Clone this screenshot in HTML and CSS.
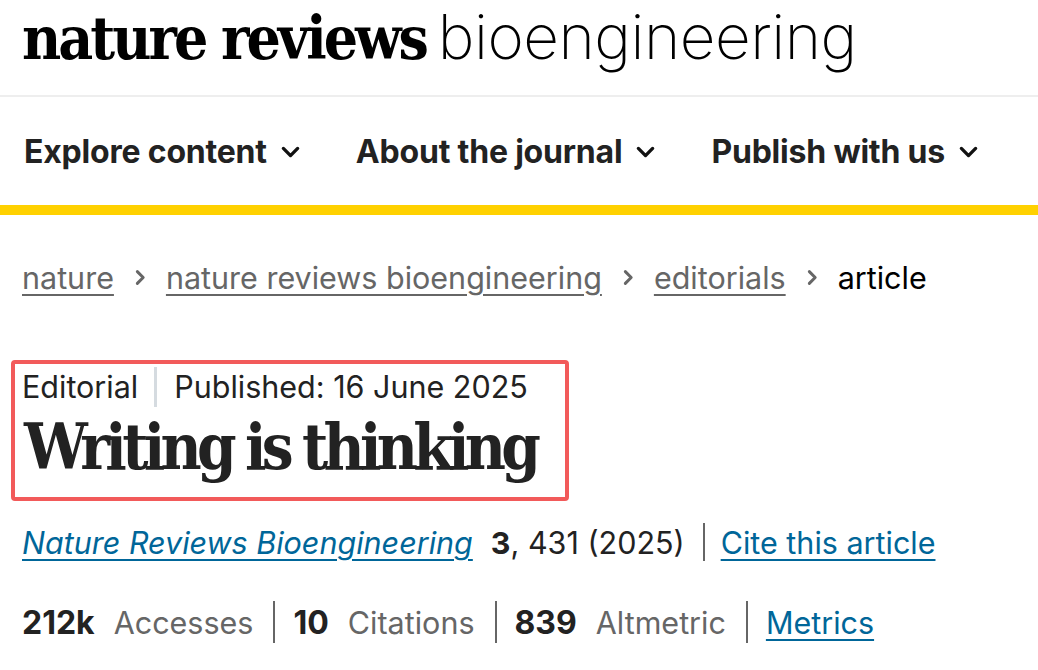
FILE: index.html
```html
<!DOCTYPE html>
<html lang="en">
<head>
<meta charset="utf-8">
<title>Writing is thinking | Nature Reviews Bioengineering</title>
<link rel="stylesheet" href="styles.css">
</head>
<body>
<header class="masthead">
  <div class="logo"><span class="logo-bold">nature reviews</span><span class="logo-light">bioengineering</span></div>
</header>
<nav class="mainnav">
  <ul class="navlist">
    <li class="navitem">Explore content<svg class="chev" viewBox="0 0 16 10" width="19" height="12"><path d="M2 2l6 6 6-6" fill="none" stroke="#111" stroke-width="2.8" stroke-linecap="round" stroke-linejoin="round"/></svg></li>
    <li class="navitem">About the journal<svg class="chev" viewBox="0 0 16 10" width="19" height="12"><path d="M2 2l6 6 6-6" fill="none" stroke="#111" stroke-width="2.8" stroke-linecap="round" stroke-linejoin="round"/></svg></li>
    <li class="navitem">Publish with us<svg class="chev" viewBox="0 0 16 10" width="19" height="12"><path d="M2 2l6 6 6-6" fill="none" stroke="#111" stroke-width="2.8" stroke-linecap="round" stroke-linejoin="round"/></svg></li>
  </ul>
</nav>
<div class="yellowbar"></div>
<main class="content">
  <ol class="crumbs">
    <li class="crumb"><a href="#">nature</a></li>
    <li class="sep"><svg viewBox="0 0 10 16" width="12" height="17"><path d="M2.5 2.5l5.5 5.5-5.5 5.5" fill="none" stroke="#666" stroke-width="2.8" stroke-linecap="round" stroke-linejoin="round"/></svg></li>
    <li class="crumb"><a href="#">nature reviews bioengineering</a></li>
    <li class="sep"><svg viewBox="0 0 10 16" width="12" height="17"><path d="M2.5 2.5l5.5 5.5-5.5 5.5" fill="none" stroke="#666" stroke-width="2.8" stroke-linecap="round" stroke-linejoin="round"/></svg></li>
    <li class="crumb"><a href="#">editorials</a></li>
    <li class="sep"><svg viewBox="0 0 10 16" width="12" height="17"><path d="M2.5 2.5l5.5 5.5-5.5 5.5" fill="none" stroke="#666" stroke-width="2.8" stroke-linecap="round" stroke-linejoin="round"/></svg></li>
    <li class="crumb current">article</li>
  </ol>
  <div class="highlight">
    <ul class="meta">
      <li class="meta-type">Editorial</li>
      <li class="meta-date">Published: 16 June 2025</li>
    </ul>
    <h1 class="title">Writing is thinking</h1>
  </div>
  <p class="citation"><a class="journal" href="#">Nature Reviews Bioengineering</a><b class="vol">3</b>, 431 (2025)<span class="vbar"></span><a class="cite" href="#">Cite this article</a></p>
  <ul class="stats">
    <li class="stat"><b>212k</b><span class="label">Accesses</span></li>
    <li class="stat"><b>10</b><span class="label">Citations</span></li>
    <li class="stat"><b>839</b><span class="label">Altmetric</span></li>
    <li class="stat"><a href="#">Metrics</a></li>
  </ul>
</main>
</body>
</html>
```

FILE: styles.css
```css
* { box-sizing: border-box; }
body {
  margin: 0;
  background: #fff;
  color: #222;
  font-family: Inter, "Liberation Sans", sans-serif;
}
.masthead {
  height: 97px;
  border-bottom: 2px solid #eeeeee;
  padding: 6px 0 0 22px;
}
.logo {
  display: flex;
  align-items: baseline;
  gap: 12px;
  line-height: 1;
  white-space: nowrap;
}
.logo-bold {
  font-family: "DejaVu Serif Condensed", "DejaVu Serif", serif;
  font-weight: bold;
  font-size: 60px;
  letter-spacing: -3px;
  color: #000;
}
.logo-light {
  font-family: Inter, "Liberation Sans", sans-serif;
  font-weight: 200;
  font-size: 62px;
  letter-spacing: -0.5px;
  color: #000;
}
.mainnav {
  height: 108px;
  display: flex;
  align-items: center;
  padding-left: 24px;
}
.navlist {
  list-style: none;
  margin: 0;
  padding: 0;
  display: flex;
  gap: 56px;
}
.navitem {
  font-size: 32px;
  font-weight: 700;
  color: #222;
  display: flex;
  align-items: center;
  gap: 14px;
  letter-spacing: -0.2px;
}
.chev { margin-top: 2px; }
.yellowbar {
  height: 10px;
  background: #ffd100;
}
.content {
  padding: 0 0 0 22px;
}
.crumbs {
  list-style: none;
  margin: 0;
  padding: 0;
  display: flex;
  align-items: center;
  gap: 20px;
  height: 124px;
  font-size: 30.5px;
}
.crumb a {
  color: #666;
  text-decoration: underline;
  text-underline-offset: 5px;
  text-decoration-thickness: 2px;
}
.crumb.current { color: #000; }
.sep { display: flex; align-items: center; }
.highlight {
  width: fit-content;
  margin-left: -11px;
  margin-top: 21px;
  border: 4px solid #f25a5a;
  border-radius: 4px;
  padding: 3px 29px 12px 7px;
}
.meta {
  list-style: none;
  margin: 0;
  padding: 0;
  display: flex;
  font-size: 30.5px;
  color: #222;
  line-height: 40px;
}
.meta-type {
  padding-right: 16px;
  border-right: 3px solid #d5dbe0;
  margin-right: 17px;
}
.title {
  margin: 2px 0 0 2px;
  font-family: "DejaVu Serif Condensed", "DejaVu Serif", serif;
  font-weight: bold;
  font-size: 63px;
  line-height: 76px;
  letter-spacing: -4.7px;
  word-spacing: -2px;
  color: #222;
}
.citation {
  margin: 21px 0 0;
  font-size: 30.5px;
  color: #222;
  display: flex;
  align-items: center;
  height: 40px;
}
.journal {
  font-style: italic;
  color: #006699;
  text-decoration: underline;
  text-underline-offset: 5px;
  text-decoration-thickness: 2px;
  margin-right: 18px;
}
.vol { font-weight: 700; }
.vbar {
  display: inline-block;
  width: 2px;
  height: 38px;
  background: #666;
  margin: 0 16px 0 18px;
}
.cite {
  color: #006699;
  text-decoration: underline;
  text-underline-offset: 5px;
  text-decoration-thickness: 2px;
}
.stats {
  list-style: none;
  margin: 39px 0 0;
  padding: 0;
  display: flex;
  align-items: center;
  font-size: 30.5px;
}
.stat {
  display: flex;
  align-items: center;
  height: 42px;
  padding: 0 18px 0 18px;
  border-left: 2px solid #666;
}
.stat:first-child { padding-left: 0; border-left: 0; }
.stat:not(:last-child) { padding-right: 20px; }
.stat b { font-weight: 700; font-size: 32px; color: #222; margin-right: 19px; }
.label { color: #666; }
.stat a {
  color: #006699;
  text-decoration: underline;
  text-underline-offset: 5px;
  text-decoration-thickness: 2px;
}
```
